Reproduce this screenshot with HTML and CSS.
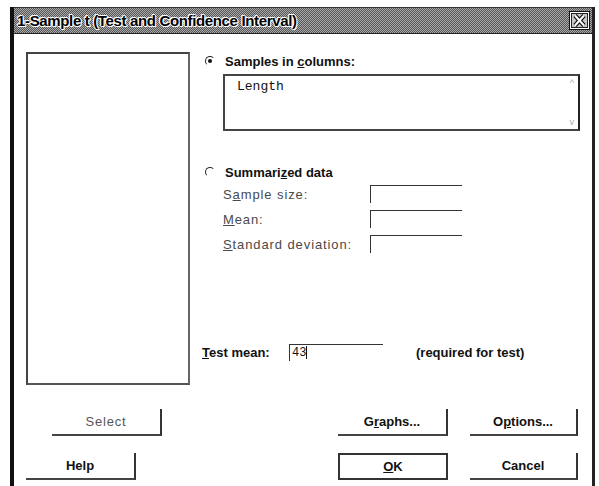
FILE: index.html
```html
<!DOCTYPE html>
<html lang="en">
<head>
    <meta charset="UTF-8">
    <title>1-Sample t (Test and Confidence Interval)</title>
    <link rel="stylesheet" href="styles.css">
</head>
<body>

<div class="ventana">
    <div class="titulo">
        <span class="titulo-texto">1-Sample t (Test and Confidence Interval)</span>
        <span class="cerrar">
            <svg width="21" height="19" viewBox="0 0 21 19">
                <rect x="0.5" y="0.5" width="20" height="18" fill="#fff" stroke="#111"/>
                <rect x="2.5" y="2.5" width="16" height="14" fill="#c8c8c8" stroke="#222"/>
                <path d="M6 4.5 L15 14.5 M15 4.5 L6 14.5" stroke="#111" stroke-width="4.5"/>
                <path d="M6 4.5 L15 14.5 M15 4.5 L6 14.5" stroke="#fff" stroke-width="2"/>
            </svg>
        </span>
    </div>

    <div class="cuerpo">
        <div class="superior">
            <div class="lista"></div>

            <div class="panel">
                <div class="opcion">
                    <span class="radio marcado"></span>
                    <span class="negrita">Samples in <u>c</u>olumns:</span>
                </div>
                <div class="caja-texto">
                    <span class="mono">Length</span>
                    <span class="flecha arriba">^</span>
                    <span class="flecha abajo">v</span>
                </div>

                <div class="opcion resumen">
                    <span class="radio"></span>
                    <span class="negrita">Summari<u>z</u>ed data</span>
                </div>
                <div class="campos">
                    <div class="campo">
                        <label>S<u>a</u>mple size:</label>
                        <span class="entrada"></span>
                    </div>
                    <div class="campo">
                        <label><u>M</u>ean:</label>
                        <span class="entrada"></span>
                    </div>
                    <div class="campo">
                        <label><u>S</u>tandard deviation:</label>
                        <span class="entrada"></span>
                    </div>
                </div>

                <div class="media">
                    <span class="negrita"><u>T</u>est mean:</span>
                    <span class="entrada media-entrada"><span class="mono-chico">43</span><span class="cursor"></span></span>
                    <span class="negrita nota">(required for test)</span>
                </div>
            </div>
        </div>

        <div class="fila-botones primera">
            <button class="boton deshabilitado boton-select">Select</button>
            <div class="grupo">
                <button class="boton">G<u>r</u>aphs...</button>
                <button class="boton">O<u>p</u>tions...</button>
            </div>
        </div>
        <div class="fila-botones">
            <button class="boton">Help</button>
            <div class="grupo">
                <button class="boton defecto"><u>O</u>K</button>
                <button class="boton">Cancel</button>
            </div>
        </div>
    </div>
</div>

</body>
</html>
```

FILE: styles.css
```css
body {
    margin: 0;
    background-color: #fff;
    font-family: "Liberation Sans", Arial, sans-serif;
    color: #111;
}
.ventana {
    margin: 7px 4px 0 10px;
    width: 578px;
    height: 479px;
    border-left: 4px solid #111;
    border-right: 3px solid #222;
    display: flex;
    flex-direction: column;
}
.titulo {
    height: 25px;
    display: flex;
    align-items: center;
    justify-content: space-between;
    padding: 0 2px 0 3px;
    border-top: 1px solid #333;
    border-bottom: 1px solid #222;
    background: repeating-conic-gradient(#555 0 25%, #aaa 0 50%) 0 0 / 2px 2px;
}
.titulo-texto {
    font-weight: bold;
    font-size: 15px;
    letter-spacing: -0.35px;
    color: #000;
    text-shadow: 1px 0 #fff, -1px 0 #fff, 0 1px #fff, 0 -1px #fff, 1px 1px #fff, -1px -1px #fff;
}
.cerrar {
    display: flex;
}
.cuerpo {
    flex: 1;
    padding: 18px 0 0 12px;
}
.superior {
    display: grid;
    grid-template-columns: 164px 1fr;
    column-gap: 12px;
    height: 333px;
}
.lista {
    border: 2px solid #444;
    border-right-color: #666;
    border-bottom-color: #555;
}
.panel {
    display: flex;
    flex-direction: column;
    padding-right: 12px;
}
.opcion {
    display: flex;
    align-items: center;
    gap: 10px;
    margin: 1px 0 0 3px;
    height: 16px;
}
.radio {
    width: 8px;
    height: 8px;
    border: 1px solid #222;
    border-right-color: transparent;
    border-bottom-color: transparent;
    border-radius: 50%;
    position: relative;
}
.radio.marcado::after {
    content: "";
    position: absolute;
    left: 2px;
    top: 2px;
    width: 4px;
    height: 4px;
    border-radius: 50%;
    background: #111;
}
.negrita {
    font-weight: bold;
    font-size: 13px;
}
.caja-texto {
    margin: 5px 0 0 21px;
    height: 53px;
    border: 2px solid #444;
    border-right-color: #222;
    position: relative;
    padding: 0 12px;
}
.mono {
    font-family: "Liberation Mono", "Courier New", monospace;
    font-size: 13px;
    line-height: 14px;
}
.flecha {
    position: absolute;
    right: 4px;
    font-size: 9px;
    color: #aaa;
}
.arriba {
    top: 2px;
}
.abajo {
    bottom: 2px;
}
.resumen {
    margin-top: 33px;
}
.campos {
    display: flex;
    flex-direction: column;
    gap: 7px;
    margin: 5px 0 0 21px;
}
.campo {
    display: flex;
    align-items: center;
    height: 18px;
}
.campo label {
    width: 147px;
    font-size: 13px;
    letter-spacing: 0.9px;
    color: #4a4a4a;
}
.entrada {
    width: 91px;
    height: 17px;
    border-top: 1px solid #333;
    border-left: 1px solid #333;
}
.media {
    margin-top: auto;
    margin-bottom: 24px;
    display: flex;
    align-items: center;
    height: 18px;
}
.media .negrita:first-child {
    width: 87px;
}
.media-entrada {
    width: 94px;
    display: flex;
    align-items: center;
    padding-left: 2px;
    box-sizing: border-box;
}
.mono-chico {
    font-family: "Liberation Mono", "Courier New", monospace;
    font-size: 12px;
}
.cursor {
    width: 1px;
    height: 13px;
    background: #111;
}
.nota {
    margin-left: 33px;
}
.fila-botones {
    display: flex;
    align-items: flex-start;
    padding-right: 14px;
}
.primera {
    margin-top: 24px;
    padding-left: 26px;
    margin-bottom: 17px;
}
.grupo {
    margin-left: auto;
    display: flex;
    gap: 22px;
}
.boton {
    width: 110px;
    height: 27px;
    background: #fff;
    border: none;
    border-right: 2px solid #333;
    border-bottom: 2px solid #444;
    font-family: "Liberation Sans", Arial, sans-serif;
    font-weight: bold;
    font-size: 13px;
    color: #111;
    padding: 0;
}
.grupo .boton:last-child {
    width: 108px;
}
.deshabilitado {
    color: #555;
    font-weight: normal;
    letter-spacing: 0.8px;
}
.defecto {
    border: 2px solid #333;
}
```
